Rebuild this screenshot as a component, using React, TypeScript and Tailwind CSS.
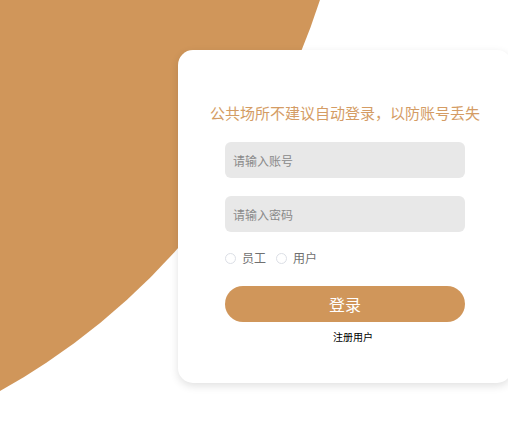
import React, {useState} from 'react';

function RadioOption({label, checked, onSelect}: {label: string; checked: boolean; onSelect: () => void}) {
    return (
        <label className="flex items-center cursor-pointer" onClick={onSelect}>
            <span
                className={`flex h-[11px] w-[11px] items-center justify-center rounded-full border ${checked ? 'border-[#d0965a]' : 'border-[#dcdfe6]'} bg-white`}>
                {checked && <span className="h-[5px] w-[5px] rounded-full bg-[#d0965a]"/>}
            </span>
            <span className="ml-[6px] text-[12px] leading-[16px] text-[#707070]">{label}</span>
        </label>
    );
}

function App() {
    const [role, setRole] = useState<string>('');

    return (
        <div
            className="relative h-[435px] w-[508px] overflow-hidden bg-white"
            style={{fontFamily: '"Noto Sans CJK SC", "Noto Sans", sans-serif'}}>
            {/* big background circle */}
            <div className="absolute left-[-1027px] top-[-901px] h-[1380px] w-[1380px] rounded-full bg-[#d0965a]"/>

            <div className="relative flex pl-[178px] pt-[50px]">
                <div
                    className="flex w-[334px] shrink-0 flex-col items-center rounded-[15px] bg-white pt-[53px] pb-[39px] shadow-[0_3px_8px_rgba(0,0,0,0.12)]">
                    <h1 className="text-[15px] font-normal leading-[20px] text-[#d49c64]">公共场所不建议自动登录，以防账号丢失</h1>

                    <input
                        className="mt-[19px] h-[36px] w-[240px] rounded-[6px] bg-[#e8e8e8] px-[8px] text-[12px] text-[#333] outline-none placeholder:text-[#8a8a8a]"
                        placeholder="请输入账号"/>
                    <input
                        type="password"
                        className="mt-[18px] h-[36px] w-[240px] rounded-[6px] bg-[#e8e8e8] px-[8px] text-[12px] text-[#333] outline-none placeholder:text-[#8a8a8a]"
                        placeholder="请输入密码"/>

                    <div className="mt-[18px] flex w-[240px] items-center gap-[10px]">
                        <RadioOption label="员工" checked={role === 'staff'} onSelect={() => setRole('staff')}/>
                        <RadioOption label="用户" checked={role === 'user'} onSelect={() => setRole('user')}/>
                    </div>

                    <button
                        className="mt-[20px] h-[36px] w-[240px] rounded-full bg-[#d0965a] text-[16px] leading-[36px] text-white">登录
                    </button>

                    <a className="ml-[16px] mt-[8px] cursor-pointer text-[10px] leading-[14px] text-black">注册用户</a>
                </div>
            </div>
        </div>
    );
}

export default App;
